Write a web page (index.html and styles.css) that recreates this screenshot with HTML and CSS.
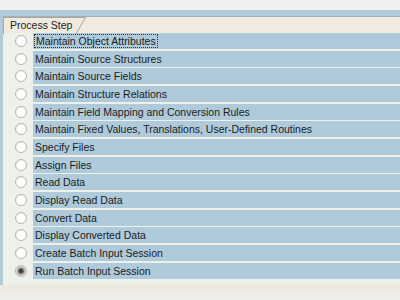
FILE: index.html
```html
<!DOCTYPE html>
<html lang="en">
<head>
    <meta charset="UTF-8" />
    <title>Process Step</title>
    <link rel="stylesheet" href="styles.css">
</head>
<body>
    <div class="panel">
        <div class="cabecera">
            <div class="tab">
                Process Step
                <svg class="tab-borde" width="86" height="17" viewBox="0 0 86 17">
                    <polyline points="0.5,17 0.5,0.5 82.5,0.5 73,17" fill="none" stroke="#a9a69a" stroke-width="1" />
                </svg>
            </div>
        </div>
        <div class="lista">
            <div class="fila"><span class="sel"><i class="radio"></i></span><span class="celda"><span class="foco">Maintain Object Attributes</span></span></div>
            <div class="fila"><span class="sel"><i class="radio"></i></span><span class="celda">Maintain Source Structures</span></div>
            <div class="fila"><span class="sel"><i class="radio"></i></span><span class="celda">Maintain Source Fields</span></div>
            <div class="fila"><span class="sel"><i class="radio"></i></span><span class="celda">Maintain Structure Relations</span></div>
            <div class="fila"><span class="sel"><i class="radio"></i></span><span class="celda">Maintain Field Mapping and Conversion Rules</span></div>
            <div class="fila"><span class="sel"><i class="radio"></i></span><span class="celda">Maintain Fixed Values, Translations, User-Defined Routines</span></div>
            <div class="fila"><span class="sel"><i class="radio"></i></span><span class="celda">Specify Files</span></div>
            <div class="fila"><span class="sel"><i class="radio"></i></span><span class="celda">Assign Files</span></div>
            <div class="fila"><span class="sel"><i class="radio"></i></span><span class="celda">Read Data</span></div>
            <div class="fila"><span class="sel"><i class="radio"></i></span><span class="celda">Display Read Data</span></div>
            <div class="fila"><span class="sel"><i class="radio"></i></span><span class="celda">Convert Data</span></div>
            <div class="fila"><span class="sel"><i class="radio"></i></span><span class="celda">Display Converted Data</span></div>
            <div class="fila"><span class="sel"><i class="radio"></i></span><span class="celda">Create Batch Input Session</span></div>
            <div class="fila"><span class="sel"><i class="radio marcado"></i></span><span class="celda">Run Batch Input Session</span></div>
        </div>
    </div>
    <div class="pie"></div>
</body>
</html>
```

FILE: styles.css
```css
body {
    margin: 0;
    background-color: #efefef;
    font-family: Tahoma, 'Liberation Sans', Arial, sans-serif;
    font-size: 10.5px;
    color: #1c1c1c;
    overflow: hidden;
}
.panel {
    margin-top: 10px;
    border-top: 6px solid #b3cad8;
    border-left: 3px solid #b3cad8;
    background-color: #eef0ea;
    padding-bottom: 6px;
}
.cabecera {
    height: 16px;
    border-top: 1px solid #9fb0ba;
    background-color: #f1ebdf;
}
.tab {
    position: relative;
    width: 76px;
    height: 16px;
    line-height: 16px;
    padding-left: 7px;
    font-size: 10.5px;
    color: #222;
}
.tab-borde {
    position: absolute;
    left: 0;
    top: 0;
}
.lista {
    display: flex;
    flex-direction: column;
    gap: 1.67px;
}
.fila {
    display: flex;
    height: 16px;
}
.sel {
    width: 30px;
    display: flex;
    align-items: center;
    justify-content: flex-end;
    padding-right: 6px;
    box-sizing: border-box;
}
.radio {
    display: block;
    width: 12px;
    height: 12px;
    border-radius: 50%;
    border: 1px solid #b4b7b1;
    background: radial-gradient(circle at 58% 62%, #ffffff 50%, #e2e2de 100%);
    box-sizing: border-box;
}
.radio.marcado {
    background: radial-gradient(circle, #333 0, #444 22%, #8e8e8c 42%, #dcdcd8 65%, #f6f6f4 100%);
}
.celda {
    flex: 1;
    background-color: #aecadb;
    line-height: 16px;
    padding-left: 2px;
    white-space: nowrap;
    overflow: hidden;
}
.foco {
    outline: 1px dotted #333;
    outline-offset: 0;
    padding: 0 1px;
}
.pie {
    height: 20px;
    background: linear-gradient(#eceade, #efefef);
}
```
